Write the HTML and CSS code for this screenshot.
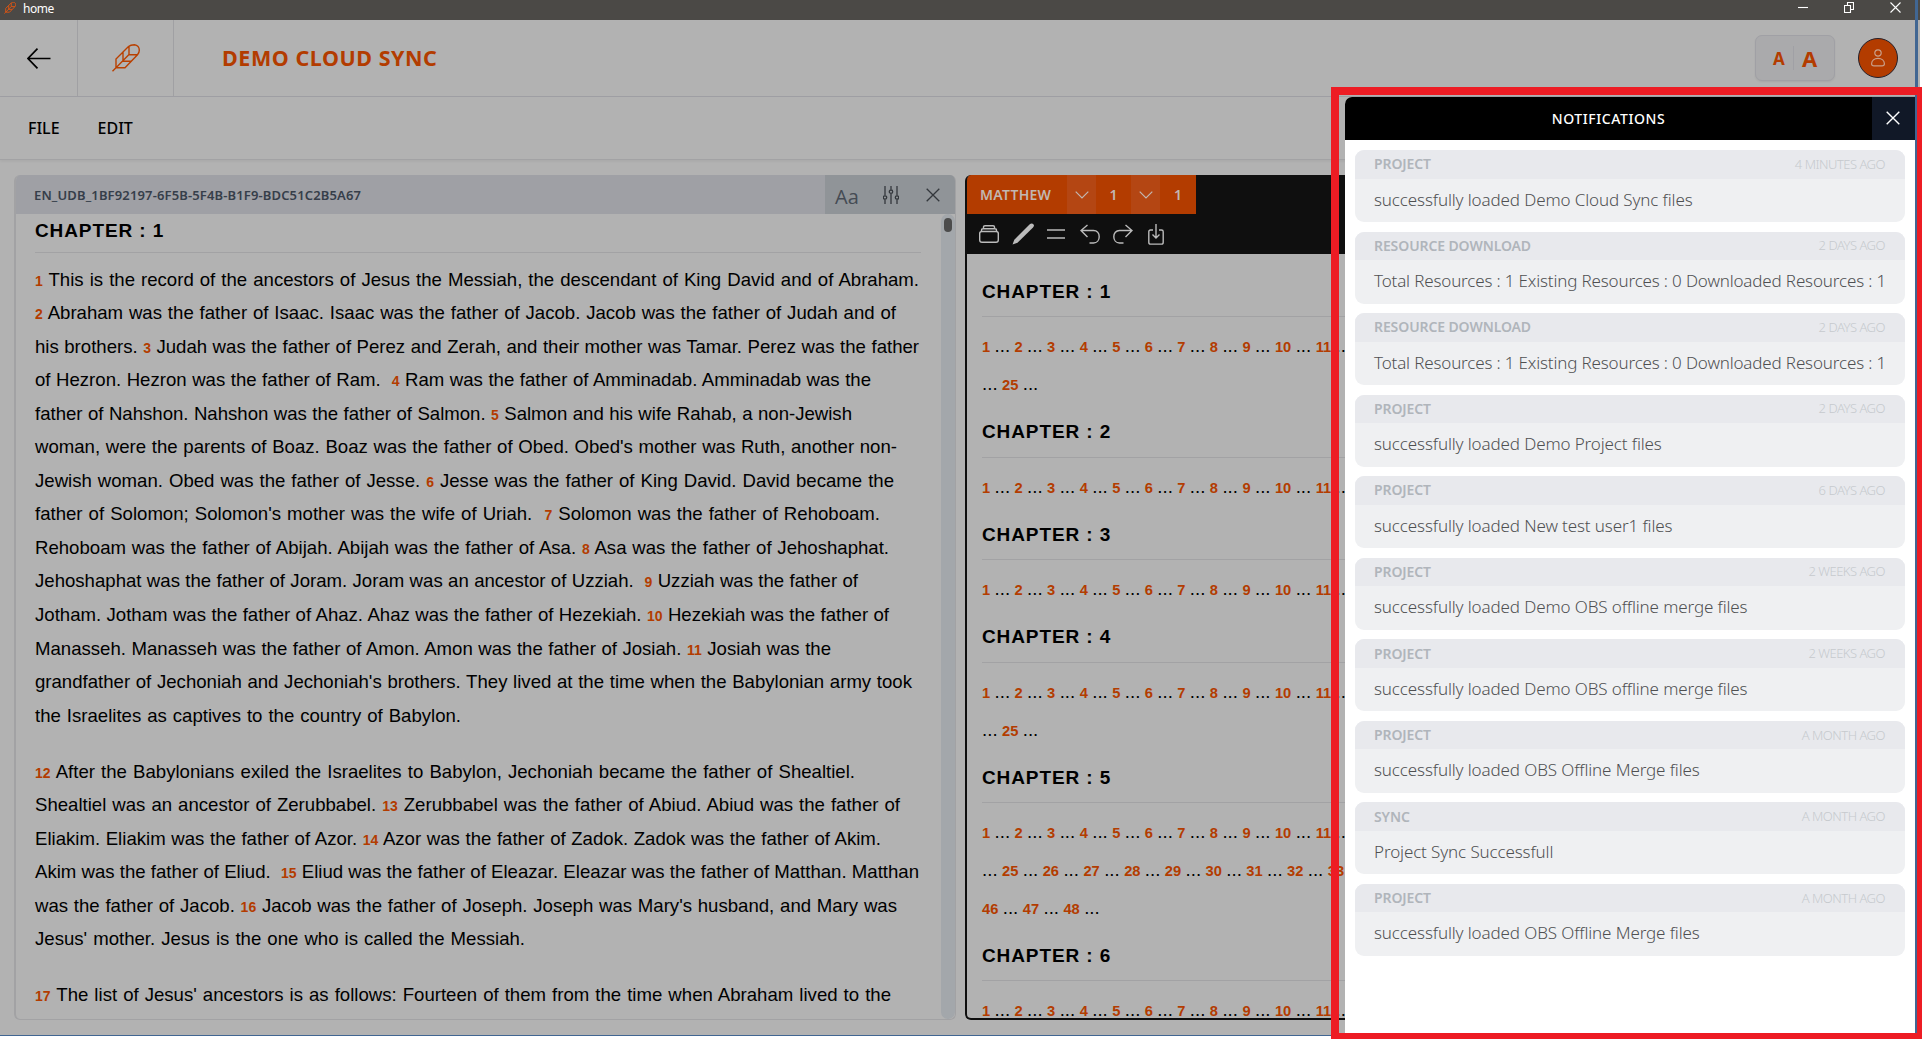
FILE: index.html
```
<!DOCTYPE html>
<html lang="en">
<head>
<meta charset="utf-8">
<title>home</title>
<link rel="stylesheet" href="styles.css">
</head>
<body>
<svg class="defs" width="0" height="0">
  <symbol id="quill" viewBox="0 0 28 28"><path d="M.5 27.200 4 23.700V15L16.500 2.500C18.500.700 20.500.7 22.500.7 25.500 1 27.300 3.500 27.300 6.200c0 2-.8 3.300-1.800 4.500L13 23.700H4L17 10.500M11 17V8.500M17 10.500V2.500M10.500 17.200h8.500M17 10.700h8.500"/></symbol>
  <symbol id="cross" viewBox="0 0 14 14"><path d="M.7.7l12.600 12.600M13.300.7.7 13.300"/></symbol>
  <symbol id="chev" viewBox="0 0 14 8"><path d="M.7.700 7 7 13.300.7"/></symbol>
</svg>
<div class="app">
  <div class="titlebar">
    <svg class="quill small"><use href="#quill"/></svg><span class="wname">home</span>
    <div class="wbtns">
      <svg width="10" height="10"><path d="M0 5.500h10"/></svg>
      <svg width="10" height="11"><path d="M.5 3.500h6v7h-6zM3.500 3V.5h6v7h-2.500"/></svg>
      <svg width="11" height="11"><path d="M.5.5l10 10M10.500.5l-10 10"/></svg>
    </div>
  </div>
  <header class="header">
    <div class="cell back"><svg width="24" height="21" viewBox="0 0 24 21"><path d="M23.500 10.500H1M10.500.700 1 10.500l9.500 9.800"/></svg></div>
    <div class="cell logo"><svg class="quill"><use href="#quill"/></svg></div>
    <h1>DEMO CLOUD SYNC</h1>
    <div class="sizes"><span class="sa">A</span><i></i><span class="la">A</span></div>
    <div class="avatar"><svg width="14" height="18" viewBox="0 0 14 18"><circle cx="7" cy="4" r="3.200"/><path d="M3 16.900C1.500 16.900.6 16.200.6 14.800.6 11.700 3.200 9.300 7 9.300s6.400 2.400 6.400 5.500c0 1.400-.9 2.100-2.400 2.100z"/></svg></div>
  </header>
  <nav class="menu"><span>FILE</span><span class="edit">EDIT</span></nav>
  <main class="main">
    <section class="pane source">
      <div class="phead">
        <span class="pname">EN_UDB_1BF92197-6F5B-5F4B-B1F9-BDC51C2B5A67</span>
        <div class="tools">
          <span class="aa">Aa</span>
          <svg class="sl" width="16" height="18" viewBox="0 0 16 18"><path d="M2 0v9.500M2 13.500V18M8 0v3.500M8 8v10M14 0v9.500M14 13.500V18"/><circle cx="2" cy="11.500" r="1.700"/><circle cx="8" cy="5.700" r="1.700"/><circle cx="14" cy="11.500" r="1.700"/></svg>
          <svg width="14" height="14"><use href="#cross"/></svg>
        </div>
      </div>
      <div class="pbody">
        <div class="text">
          <h2>CHAPTER : 1</h2>
          <p>
            <span style="width:884px"><b>1</b> This is the record of the ancestors of Jesus the Messiah, the descendant of King David and of Abraham.</span>
            <span style="width:861px"><b>2</b> Abraham was the father of Isaac. Isaac was the father of Jacob. Jacob was the father of Judah and of</span>
            <span style="width:884px">his brothers. <b>3</b> Judah was the father of Perez and Zerah, and their mother was Tamar. Perez was the father</span>
            <span style="width:836px">of Hezron. Hezron was the father of Ram. &nbsp;<b>4</b> Ram was the father of Amminadab. Amminadab was the</span>
            <span style="width:817px">father of Nahshon. Nahshon was the father of Salmon. <b>5</b> Salmon and his wife Rahab, a non-Jewish</span>
            <span style="width:862px">woman, were the parents of Boaz. Boaz was the father of Obed. Obed's mother was Ruth, another non-</span>
            <span style="width:859px">Jewish woman. Obed was the father of Jesse. <b>6</b> Jesse was the father of King David. David became the</span>
            <span style="width:845px">father of Solomon; Solomon's mother was the wife of Uriah. &nbsp;<b>7</b> Solomon was the father of Rehoboam.</span>
            <span style="width:854px">Rehoboam was the father of Abijah. Abijah was the father of Asa. <b>8</b> Asa was the father of Jehoshaphat.</span>
            <span style="width:823px">Jehoshaphat was the father of Joram. Joram was an ancestor of Uzziah. &nbsp;<b>9</b> Uzziah was the father of</span>
            <span style="width:854px">Jotham. Jotham was the father of Ahaz. Ahaz was the father of Hezekiah. <b>10</b> Hezekiah was the father of</span>
            <span style="width:796px">Manasseh. Manasseh was the father of Amon. Amon was the father of Josiah. <b>11</b> Josiah was the</span>
            <span style="width:877px">grandfather of Jechoniah and Jechoniah's brothers. They lived at the time when the Babylonian army took</span>
            <span style="width:426px">the Israelites as captives to the country of Babylon.</span>
          </p>
          <p>
            <span style="width:820px"><b>12</b> After the Babylonians exiled the Israelites to Babylon, Jechoniah became the father of Shealtiel.</span>
            <span style="width:865px">Shealtiel was an ancestor of Zerubbabel. <b>13</b> Zerubbabel was the father of Abiud. Abiud was the father of</span>
            <span style="width:846px">Eliakim. Eliakim was the father of Azor. <b>14</b> Azor was the father of Zadok. Zadok was the father of Akim.</span>
            <span style="width:884px">Akim was the father of Eliud. &nbsp;<b>15</b> Eliud was the father of Eleazar. Eleazar was the father of Matthan. Matthan</span>
            <span style="width:862px">was the father of Jacob. <b>16</b> Jacob was the father of Joseph. Joseph was Mary's husband, and Mary was</span>
            <span style="width:490px">Jesus' mother. Jesus is the one who is called the Messiah.</span>
          </p>
          <p>
            <span style="width:856px"><b>17</b> The list of Jesus' ancestors is as follows: Fourteen of them from the time when Abraham lived to the</span>
          </p>
        </div>
        <div class="track"><div class="thumb"></div></div>
      </div>
    </section>
    <section class="pane target">
      <div class="thead">
        <div class="nav"><span class="book">MATTHEW</span><span class="dd"><svg width="14" height="8"><use href="#chev"/></svg></span><span class="n">1</span><span class="dd"><svg width="14" height="8"><use href="#chev"/></svg></span><span class="n last">1</span></div>
        <div class="toolbar">
          <svg width="20" height="18" viewBox="0 0 20 18"><path d="M3 6.500h14q2.300 0 2.300 2v6.500q0 2.300-2.300 2.300H3Q.7 17.300.7 15V8.500q0-2 2.300-2zM2.500 6.500V5q0-1.300 1.500-1.300h12q1.500 0 1.500 1.300v1.500M4.500 3.500V2Q4.500.7 6 .7h8q1.500 0 1.500 1.300v1.500"/></svg>
          <svg class="pen" width="22" height="22" viewBox="0 0 22 22"><path class="fill" d="M.5 21.500 2.300 16.800 17.500 1.500C19 0 20.600.3 21.400 1.200s.7 2.200-.4 3.400L5.500 19.700z"/></svg>
          <svg width="18" height="10" viewBox="0 0 18 10"><path d="M0 1h18M0 9h18"/></svg>
          <svg class="wide" width="20" height="20" viewBox="0 0 20 20"><path d="M7.500 1 1 6.500l6.500 6.500M1 6.500h12.500c3.500 0 5.700 2.700 5.700 6.200s-2.200 6.300-5.700 6.300H9.500"/></svg>
          <svg width="20" height="20" viewBox="0 0 20 20"><path d="M12.500 1 19 6.500l-6.500 6.500M19 6.500H6.500C3 6.500.8 9.200.8 12.700S3 19 6.500 19h4"/></svg>
          <svg class="wide" width="16" height="21" viewBox="0 0 16 21"><path d="M5 6H2.500Q.8 6 .8 7.700v10.500q0 1.900 1.700 1.900h11q1.700 0 1.700-1.900V7.700Q15.200 6 13.500 6H11M8 0v14M4.500 10.500 8 14l3.500-3.500"/></svg>
        </div>
      </div>
      <div class="verses">
        <h2>CHAPTER : 1</h2>
        <p><b>1</b> ... <b>2</b> ... <b>3</b> ... <b>4</b> ... <b>5</b> ... <b>6</b> ... <b>7</b> ... <b>8</b> ... <b>9</b> ... <b>10</b> ... <b>11</b> ...<br>... <b>25</b> ...</p>
        <h2>CHAPTER : 2</h2>
        <p><b>1</b> ... <b>2</b> ... <b>3</b> ... <b>4</b> ... <b>5</b> ... <b>6</b> ... <b>7</b> ... <b>8</b> ... <b>9</b> ... <b>10</b> ... <b>11</b> ...</p>
        <h2>CHAPTER : 3</h2>
        <p><b>1</b> ... <b>2</b> ... <b>3</b> ... <b>4</b> ... <b>5</b> ... <b>6</b> ... <b>7</b> ... <b>8</b> ... <b>9</b> ... <b>10</b> ... <b>11</b> ...</p>
        <h2>CHAPTER : 4</h2>
        <p><b>1</b> ... <b>2</b> ... <b>3</b> ... <b>4</b> ... <b>5</b> ... <b>6</b> ... <b>7</b> ... <b>8</b> ... <b>9</b> ... <b>10</b> ... <b>11</b> ...<br>... <b>25</b> ...</p>
        <h2>CHAPTER : 5</h2>
        <p><b>1</b> ... <b>2</b> ... <b>3</b> ... <b>4</b> ... <b>5</b> ... <b>6</b> ... <b>7</b> ... <b>8</b> ... <b>9</b> ... <b>10</b> ... <b>11</b> ...<br>... <b>25</b> ... <b>26</b> ... <b>27</b> ... <b>28</b> ... <b>29</b> ... <b>30</b> ... <b>31</b> ... <b>32</b> ... <b>33</b><br><b>46</b> ... <b>47</b> ... <b>48</b> ...</p>
        <h2>CHAPTER : 6</h2>
        <p><b>1</b> ... <b>2</b> ... <b>3</b> ... <b>4</b> ... <b>5</b> ... <b>6</b> ... <b>7</b> ... <b>8</b> ... <b>9</b> ... <b>10</b> ... <b>11</b> ...</p>
      </div>
    </section>
  </main>
</div>
<aside class="drawer">
  <div class="dhead"><span>NOTIFICATIONS</span><div class="close"><svg width="14" height="14"><use href="#cross"/></svg></div></div>
  <div class="cards">
    <article><header><b>PROJECT</b><time>4 MINUTES AGO</time></header><p>successfully loaded Demo Cloud Sync files</p></article>
    <article><header><b>RESOURCE DOWNLOAD</b><time>2 DAYS AGO</time></header><p class="res">Total Resources : 1 Existing Resources : 0 Downloaded Resources : 1</p></article>
    <article><header><b>RESOURCE DOWNLOAD</b><time>2 DAYS AGO</time></header><p class="res">Total Resources : 1 Existing Resources : 0 Downloaded Resources : 1</p></article>
    <article><header><b>PROJECT</b><time>2 DAYS AGO</time></header><p>successfully loaded Demo Project files</p></article>
    <article><header><b>PROJECT</b><time>6 DAYS AGO</time></header><p>successfully loaded New test user1 files</p></article>
    <article><header><b>PROJECT</b><time>2 WEEKS AGO</time></header><p>successfully loaded Demo OBS offline merge files</p></article>
    <article><header><b>PROJECT</b><time>2 WEEKS AGO</time></header><p>successfully loaded Demo OBS offline merge files</p></article>
    <article><header><b>PROJECT</b><time>A MONTH AGO</time></header><p>successfully loaded OBS Offline Merge files</p></article>
    <article><header><b>SYNC</b><time>A MONTH AGO</time></header><p>Project Sync Successfull</p></article>
    <article><header><b>PROJECT</b><time>A MONTH AGO</time></header><p>successfully loaded OBS Offline Merge files</p></article>
  </div>
</aside>
<div class="edge"></div>
<div class="frame"></div>
</body>
</html>
```
FILE: styles.css
```
*{box-sizing:border-box;margin:0;padding:0}
body{width:1922px;height:1039px;background:#fff;overflow:hidden;position:relative;font-family:"Noto Sans","Open Sans",sans-serif}
svg{fill:none;display:block;flex:none}
.defs{position:absolute}
.app{width:1920px;height:1036px;background:#b2b2b2;border-bottom:1px solid #416692;display:flex;flex-direction:column}
.titlebar{height:20px;flex:none;background:#4b4946;display:flex;align-items:flex-start;padding:2px 19px 0 4px}
.quill{width:28px;height:28px;stroke:#b94000;stroke-width:1.4}
.quill.small{width:12px;height:12px;stroke:#e8570f;stroke-width:2}
.wname{color:#fff;font-size:12px;line-height:14px;margin-left:7px;letter-spacing:-.5px}
.wbtns{margin-left:auto;display:flex;gap:36px;stroke:#fff;stroke-width:1.100}
.header{height:77px;flex:none;border-bottom:1px solid #a0a0a5;display:flex;align-items:center}
.cell{height:76px;border-right:1px solid #a0a0a3;display:flex;align-items:center;justify-content:center}
.back{width:78px;stroke:#000;stroke-width:1.700}
.logo{width:96px}
.header h1{font-size:21.500px;font-weight:700;letter-spacing:.55px;color:#b33c00;margin-left:48px;line-height:30px}
.sizes{margin-left:auto;width:80px;height:46px;border:1px solid #a0a0a5;border-radius:7px;background:#aaaaac;display:flex;align-items:center;justify-content:center;color:#b33c00;font-weight:700;box-shadow:0 1px 2px #0001}
.sizes i{width:1px;height:24px;background:#a0a0a5;margin:0 8px}
.sa{font-size:17px;width:12px}
.la{font-size:22px;width:15px}
.avatar{width:40px;height:40px;border-radius:50%;background:#b33c00;border:1px solid #24202a;margin:0 22px 0 23px;display:flex;align-items:center;justify-content:center;stroke:#c9a08a;stroke-width:1.200}
.menu{height:63px;flex:none;border-bottom:1px solid #a2a2a4;box-shadow:0 1px 3px #0001;display:flex;align-items:center;padding-left:28px;font-size:16px;font-weight:500;color:#000}
.menu .edit{margin-left:38px}
.main{height:860px;flex:none;margin-bottom:15px;display:flex;gap:9px;padding:15px 0 0 14px}
.pane{overflow:hidden;border-radius:6px;display:flex;flex-direction:column}
.source{width:942px;border:1px solid #a2a2a4;border-left-width:2px;border-top:0}
.phead{height:39px;flex:none;background:#9fa0a5;display:flex;justify-content:space-between;align-items:center}
.pname{margin-left:18px;font-size:13px;font-weight:600;letter-spacing:.14px;color:#363e4a}
.tools{width:130px;height:39px;background:#909498;display:flex;align-items:center;justify-content:space-between;padding:0 15px 0 10px;stroke:#33373c;stroke-width:1.300}
.aa{font-size:20px;line-height:20px;color:#454b54;font-family:"Open Sans",sans-serif;padding-top:5px;width:25px}
.tools .sl{margin-right:5px}
.pbody{flex:1;display:flex;justify-content:space-between;min-height:0}
.text{width:886px;margin-left:19px;font-family:"Liberation Sans",sans-serif;font-size:18.600px;line-height:33.550px;color:#000;white-space:nowrap}
h2{font-family:"Liberation Sans",sans-serif;font-size:19px;font-weight:700;letter-spacing:.9px;color:#000;border-bottom:1px solid #a2a2a4}
.text h2{height:39px;line-height:33px;margin-bottom:9.500px}
.text p{margin-bottom:22.400px}
.text p span{display:block;white-space:normal;height:33.550px;text-align-last:justify;word-spacing:-2.500px}
.text b{font-size:14px;line-height:0;color:#b33c00}
.track{width:14px;background:#a3a7ab;border-radius:7px;padding:4px 3px}
.thumb{width:8px;height:14px;border-radius:4px;background:#4c4c4c}
.target{width:948px;border:2px solid #0f0f0f;border-top:0}
.thead{background:#0f0f0f;height:79px;flex:none;margin-left:-2px}
.nav{display:flex;height:39px;width:231px;background:#b33c00;color:#c2b7b1;font-size:14px;font-weight:600;align-items:center}
.book{width:102px;padding-left:15px;letter-spacing:.25px}
.dd{width:29px;height:39px;background:#b44613;display:flex;align-items:center;justify-content:center;stroke:#c2b7b1;stroke-width:1.200}
.n{width:35px;text-align:center}
.n.last{width:36px}
.toolbar{height:40px;display:flex;align-items:center;padding-left:14px;stroke:#bbb;stroke-width:1.400}
.toolbar svg+svg{margin-left:13px}
.toolbar svg.wide{margin-left:15px}
.fill{fill:#bbb;stroke:none}
.verses{padding-left:15px;font-family:"Liberation Sans",sans-serif;font-size:18.700px;color:#000;white-space:nowrap;line-height:38px}
.verses h2{height:63.400px;padding-top:20px;line-height:36px}
.verses p{padding-top:10px;margin-bottom:-9px;word-spacing:-.8px}
.verses b{font-size:14.700px;line-height:0;color:#b33c00}
.drawer{position:absolute;left:1345px;top:97px;width:570px;height:936px;background:#fff;border-radius:7px 0 0 0;overflow:hidden}
.dhead{height:43px;background:#000;display:flex;color:#fff;font-size:14px;font-weight:500;letter-spacing:.58px;align-items:center}
.dhead span{flex:1;text-align:center}
.close{width:43px;height:43px;background:#111827;display:flex;align-items:center;justify-content:center;stroke:#fff;stroke-width:1.400;padding:0 2px 2px 0}
.cards{padding:10px;display:flex;flex-direction:column;gap:9.560px}
.cards article{height:72px;border-radius:9px;background:#eff0f2;overflow:hidden}
.cards header{height:28.500px;background:#e8e9ed;display:flex;justify-content:space-between;align-items:center;padding:0 20px 1px 19px}
.cards b{font-size:14px;font-weight:600;letter-spacing:-.1px;color:#b0b5bb}
.cards time{font-size:13px;font-weight:300;letter-spacing:-.5px;color:#c6c9ce}
.cards p{font-size:17px;font-weight:300;line-height:42px;letter-spacing:-.12px;font-variant-ligatures:common-ligatures;padding-left:19px;color:#4f5052;white-space:nowrap}
.cards .res{letter-spacing:-.16px}
.edge{position:absolute;left:1915px;top:0;width:3px;height:1036px;background:#416692}
.frame{position:absolute;left:1331px;top:87px;width:591px;height:952px;border:8px solid #ed1c24;border-right-width:5px;border-bottom-width:6px}
```
